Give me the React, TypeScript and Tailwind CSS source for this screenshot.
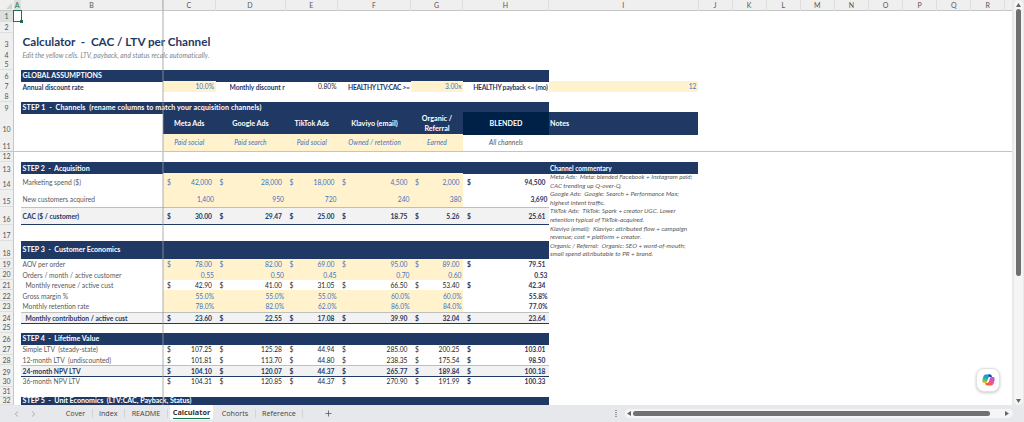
import type { ReactNode } from "react";
import clsx from "clsx";

type Kind = "usd" | "num";
type Line = {
  n: number;
  h: string;
  label: string;
  kind: Kind;
  values: string[];
  input?: boolean;
  total?: boolean;
  indent?: boolean;
  tall?: boolean;
};

const COLS =
  "grid grid-cols-[14px_7px_142px_52.5px_70px_52.5px_73px_52px_86px_149px] w-[698px]";

const HEADERS = ["A", "B", "C", "D", "E", "F", "G", "H", "I", "J", "K", "L", "M", "N", "O", "P", "Q", "R"];

const acquisition: Line[] = [
  { n: 14, h: "h-[17px]", label: "Marketing spend ($)", kind: "usd", input: true, tall: true, values: ["42,000", "28,000", "18,000", "4,500", "2,000", "94,500"] },
  { n: 15, h: "h-[17px]", label: "New customers acquired", kind: "num", input: true, tall: true, values: ["1,400", "950", "720", "240", "380", "3,690"] },
  { n: 16, h: "h-[17.5px]", label: "CAC ($ / customer)", kind: "usd", total: true, values: ["30.00", "29.47", "25.00", "18.75", "5.26", "25.61"] },
];

const economics: Line[] = [
  { n: 19, h: "h-[10.7px]", label: "AOV per order", kind: "usd", input: true, values: ["78.00", "82.00", "69.00", "95.00", "89.00", "79.51"] },
  { n: 20, h: "h-[10.7px]", label: "Orders / month / active customer", kind: "num", input: true, values: ["0.55", "0.50", "0.45", "0.70", "0.60", "0.53"] },
  { n: 21, h: "h-[10.6px]", label: "Monthly revenue / active cust", kind: "usd", indent: true, values: ["42.90", "41.00", "31.05", "66.50", "53.40", "42.34"] },
  { n: 22, h: "h-[10.7px]", label: "Gross margin %", kind: "num", input: true, values: ["55.0%", "55.0%", "55.0%", "60.0%", "60.0%", "55.8%"] },
  { n: 23, h: "h-[10.7px]", label: "Monthly retention rate", kind: "num", input: true, values: ["78.0%", "82.0%", "62.0%", "86.0%", "84.0%", "77.0%"] },
  { n: 24, h: "h-[10.6px]", label: "Monthly contribution / active cust", kind: "usd", total: true, indent: true, values: ["23.60", "22.55", "17.08", "39.90", "32.04", "23.64"] },
];

const lifetime: Line[] = [
  { n: 27, h: "h-[10.7px]", label: "Simple LTV  (steady-state)", kind: "usd", values: ["107.25", "125.28", "44.94", "285.00", "200.25", "103.01"] },
  { n: 28, h: "h-[10.7px]", label: "12-month LTV  (undiscounted)", kind: "usd", values: ["101.81", "113.70", "44.80", "238.35", "175.54", "98.50"] },
  { n: 29, h: "h-[10.6px]", label: "24-month NPV LTV", kind: "usd", total: true, values: ["104.10", "120.07", "44.37", "265.77", "189.84", "100.18"] },
  { n: 30, h: "h-[10.7px]", label: "36-month NPV LTV", kind: "usd", values: ["104.31", "120.85", "44.37", "270.90", "191.99", "100.33"] },
];

const channels = [
  ["Meta Ads", "Paid social"],
  ["Google Ads", "Paid search"],
  ["TikTok Ads", "Paid social"],
  ["Klaviyo (email)", "Owned / retention"],
  ["Organic / Referral", "Earned"],
];

const commentary = [
  ["Meta Ads:  Meta: blended Facebook + Instagram paid;", "CAC trending up Q-over-Q."],
  ["Google Ads:  Google: Search + Performance Max;", "highest intent traffic."],
  ["TikTok Ads:  TikTok: Spark + creator UGC. Lower", "retention typical of TikTok-acquired."],
  ["Klaviyo (email):  Klaviyo: attributed flow + campaign", "revenue; cost = platform + creator."],
  ["Organic / Referral:  Organic: SEO + word-of-mouth;", "small spend attributable to PR + brand."],
];

function RowNumber({ n }: { n: number }) {
  return (
    <div
      className={clsx(
        "flex items-end justify-center border-r border-b border-r-[#c6c6c6] border-b-[#dedede] text-[7px] leading-[7.6px]",
        n === 1 ? "bg-[#dedede] text-[#1e7145]" : "bg-[#efefef] text-[#555]",
        n === 3 && "pb-[3px]",
        n === 4 && "pb-px"
      )}
    >
      {n}
    </div>
  );
}

function Row({ n, h, children }: { n: number; h: string; children?: ReactNode }) {
  return (
    <div className={clsx(COLS, h, "shrink-0")}>
      <RowNumber n={n} />
      <div />
      {children}
    </div>
  );
}

function Band({ n, h, children, note, wide, last }: { n: number; h: string; children: ReactNode; note?: string; wide?: boolean; last?: boolean }) {
  return (
    <Row n={n} h={h}>
      <div
        className={clsx(
          "col-span-7 flex items-center bg-[#1f3864] pl-[1.5px] text-[7.1px] font-bold whitespace-pre text-white",
          wide && "tracking-[0.12px]",
          last ? "leading-[8px]" : "pt-[1.5px]"
        )}
      >
        {children}
      </div>
      {note && (
        <div className="flex items-center bg-[#1f3864] pt-px pl-px text-[6.5px] font-bold text-white">{note}</div>
      )}
    </Row>
  );
}

function DataRow({ line, children }: { line: Line; children?: ReactNode }) {
  const { n, h, label, kind, values, input, total, indent, tall } = line;
  const edge = total && "border-t border-b border-t-[#bfbfbf] border-b-[#1f3864] bg-[#f2f2f2]";
  return (
    <Row n={n} h={h}>
      <div
        className={clsx(
          "flex items-center whitespace-pre",
          edge,
          tall && "pt-[1.5px]",
          indent ? "pl-[4.5px]" : "pl-[1.5px]",
          total ? "font-bold text-[#1f3864]" : "text-[#595959]"
        )}
      >
        {label}
      </div>
      {values.map((v, i) => {
        const blended = i === 5;
        return (
          <div
            key={i}
            className={clsx(
              "flex items-center",
              edge,
              tall && "pt-[1.5px]",
              kind === "usd" ? "justify-between pr-[3.5px] pl-[4px]" : "justify-end pr-[1.5px]",
              input && !blended && "bg-[#fff2cc] text-[#4472c4]",
              (total || blended) && "font-bold text-[#1f3864]",
              !input && !total && !blended && "text-[#262626]"
            )}
          >
            {kind === "usd" && <span>$</span>}
            <span>{v}</span>
          </div>
        );
      })}
      {children}
    </Row>
  );
}

function ColumnHeader() {
  return (
    <div className="grid h-[11px] shrink-0 grid-cols-[14px_7px_142px_52.5px_70px_52.5px_73px_52px_86px_149.5px_repeat(9,34.1px)_1fr] border-b border-[#c6c6c6] bg-[#efefef] text-[7px] leading-[11px] text-[#555]">
      <div className="flex items-end justify-end pr-0.5 pb-0.5">
        <svg width="6" height="6" viewBox="0 0 6 6">
          <path d="M6 0V6H0Z" fill="#d2d2d2" />
        </svg>
      </div>
      {HEADERS.map((c) => (
        <div
          key={c}
          className={clsx(
            "border-r border-[#dedede] text-center",
            c === "A" && "bg-[#dedede] text-[#1e7145]"
          )}
        >
          {c}
        </div>
      ))}
      <div />
    </div>
  );
}

function CopilotButton() {
  return (
    <button className="absolute top-[368px] left-[976px] flex size-6 items-center justify-center rounded-lg border border-[#e2e2e2] bg-white shadow-[0_1px_3px_rgba(0,0,0,0.22)]">
      <svg width="13" height="12" viewBox="0 0 26 24">
        <defs>
          <linearGradient id="cpTop" x1="0.5" y1="0" x2="0.3" y2="1">
            <stop offset="0" stopColor="#1b8fe0" />
            <stop offset="0.5" stopColor="#2bb3a3" />
            <stop offset="1" stopColor="#f0c419" />
          </linearGradient>
          <linearGradient id="cpBottom" x1="0.8" y1="0" x2="0.3" y2="1">
            <stop offset="0" stopColor="#a35be8" />
            <stop offset="0.5" stopColor="#ee5490" />
            <stop offset="1" stopColor="#f8622c" />
          </linearGradient>
        </defs>
        <path d="M8 1H16C18.500 1 19 3 19.700 6H16C13 6 12.500 8 11.500 11L10 16C9 18 8 18 5 18C0 18 0 14 1.500 9C3 4 4 1 8 1Z" fill="url(#cpTop)" />
        <path d="M12 1H16C18.500 1 19 3 19.700 6H16C14.500 6 13.500 4 12 1Z" fill="#1b44b8" />
        <path d="M18 23H10C7.500 23 7 21 6.300 18H10C13 18 13.500 16 14.500 13L16 8C17 6 18 6 21 6C26 6 26 10 24.500 15C23 20 22 23 18 23Z" fill="url(#cpBottom)" />
      </svg>
    </button>
  );
}

function SheetTab({ name, w }: { name: string; w: string }) {
  return (
    <div className={clsx("flex h-[9px] items-center justify-center border-r border-[#d2d4d6]", w)}>{name}</div>
  );
}

function TabBar() {
  return (
    <div className="relative flex h-[17px] shrink-0 items-center bg-[#e6e8eb] font-['Open_Sans',sans-serif] text-[7.2px] text-[#444]">
      <div className="flex w-[59.5px] items-center gap-[12px] pl-[14px]">
        <svg width="5" height="6" viewBox="0 0 5 6" fill="none" stroke="#a5a5a5" strokeWidth="0.9">
          <path d="M4 0.500L1.200 3L4 5.500" />
        </svg>
        <svg width="5" height="6" viewBox="0 0 5 6" fill="none" stroke="#a5a5a5" strokeWidth="0.9">
          <path d="M1 0.500L3.800 3L1 5.500" />
        </svg>
      </div>
      <SheetTab name="Cover" w="w-[33px]" />
      <SheetTab name="Index" w="w-[32.5px]" />
      <SheetTab name="README" w="w-[43px]" />
      <div className="mx-[2px] flex h-full w-[43px] justify-center pb-[2px]">
        <div className="flex w-full justify-center rounded-b-[3px] bg-white">
          <span className="h-[13.5px] border-b border-[#107c41] text-[7.3px] leading-[14px] font-bold text-[#333]">
            Calculator
          </span>
        </div>
      </div>
      <SheetTab name="Cohorts" w="w-[41px]" />
      <SheetTab name="Reference" w="w-[47px]" />
      <svg className="ml-[21.5px]" width="7" height="7" viewBox="0 0 7 7" stroke="#555" strokeWidth="0.8">
        <path d="M3.500 0.500V6.500M0.500 3.500H6.500" />
      </svg>
      <svg className="ml-[283px]" width="2" height="7" viewBox="0 0 2 7" fill="#999">
        <path d="M0 0H2V1H0ZM0 2H2V3H0ZM0 4H2V5H0ZM0 6H2V7H0Z" />
      </svg>
      <div className="ml-[8px] flex h-[9px] w-[388px] items-center rounded-full bg-[#f5f5f5] px-[2px]">
        <svg width="4" height="5" viewBox="0 0 4 5" fill="#666">
          <path d="M4 0V5L0 2.500Z" />
        </svg>
        <div className="ml-[2.5px] h-[5px] w-[357px] rounded-full bg-[#707070]" />
        <svg className="mr-[2px] ml-auto" width="4" height="5" viewBox="0 0 4 5" fill="#666">
          <path d="M0 0V5L4 2.500Z" />
        </svg>
      </div>
    </div>
  );
}

export default function App() {
  return (
    <div className="relative flex h-[422px] w-[1024px] flex-col overflow-hidden bg-white font-[Lato,sans-serif] text-[6.7px]">
      <div className="flex h-[405px] shrink-0">
        <div className="flex w-[1012px] flex-col">
          <ColumnHeader />
          <Row n={1} h="h-[11px]" />
          <Row n={2} h="h-[10.5px]" />
          <Row n={3} h="h-[17px]">
            <div className="flex items-center pb-[3px] pl-[1.5px] text-[11.7px] font-bold whitespace-pre text-[#1f3864]">
              Calculator  -  CAC / LTV per Channel
            </div>
          </Row>
          <Row n={4} h="h-[10px]">
            <div className="flex items-center pb-[2px] pl-[1.5px] tracking-[0.04px] whitespace-nowrap text-[#7f7f7f] italic">
              Edit the yellow cells. LTV, payback, and status recalc automatically.
            </div>
          </Row>
          <Row n={5} h="h-[10px]" />
          <Band n={6} h="h-[11px]">GLOBAL ASSUMPTIONS</Band>
          <Row n={7} h="h-[10.5px]">
            <div className="flex items-center pt-px pl-[1.5px] font-bold tracking-[-0.02px] text-[#1f3864]">
              Annual discount rate
            </div>
            <div className="flex items-center justify-end bg-[#fff2cc] pr-[1.5px] text-[#4472c4]">10.0%</div>
            <div className="ml-[14px] flex items-center overflow-hidden pt-px font-bold tracking-[-0.06px] whitespace-nowrap text-[#1f3864]">
              Monthly discount r
            </div>
            <div className="flex items-center justify-end pr-[1.5px] text-[#262626]">0.80%</div>
            <div className="flex items-center justify-end pt-px pr-[1.5px] font-bold tracking-[-0.32px] whitespace-nowrap text-[#1f3864]">
              HEALTHY LTV:CAC &gt;=
            </div>
            <div className="flex items-center justify-end bg-[#fff2cc] pr-[1.5px] text-[#4472c4]">3.00x</div>
            <div className="flex items-center justify-end pt-px pr-[1.5px] font-bold tracking-[-0.24px] whitespace-nowrap text-[#1f3864]">
              HEALTHY payback &lt;= (mo)
            </div>
            <div className="flex items-center justify-end bg-[#fff2cc] pr-[1.5px] text-[#4472c4]">12</div>
          </Row>
          <Row n={8} h="h-[10.5px]" />
          <Band n={9} h="h-[10.5px]" wide>STEP 1  -  Channels  (rename columns to match your acquisition channels)</Band>
          <Row n={10} h="h-[21.5px]">
            <div />
            {channels.map(([name]) => (
              <div
                key={name}
                className={clsx(
                  "flex items-center justify-center bg-[#1f3864] pt-[1.5px] text-center text-[7.2px] leading-[10.5px] font-bold text-white",
                  name.startsWith("Organic") && "px-[8px]"
                )}
              >
                {name}
              </div>
            ))}
            <div className="flex items-center justify-center bg-[#002147] pt-[1.5px] text-[7.1px] font-bold text-white">
              BLENDED
            </div>
            <div className="flex items-center bg-[#1f3864] pt-[1.5px] pl-px text-[7.2px] font-bold text-white">Notes</div>
          </Row>
          <Row n={11} h="h-[18px]">
            <div />
            {channels.map(([name, type]) => (
              <div
                key={name}
                className="flex items-center justify-center bg-[#fff2cc] tracking-[0.08px] text-[#4472c4] italic"
              >
                {type}
              </div>
            ))}
            <div className="flex items-center justify-center tracking-[0.08px] text-[#595959] italic">All channels</div>
          </Row>
          <Row n={12} h="h-[10.5px]" />
          <Band n={13} h="h-[11px]" note="Channel commentary">STEP 2  -  Acquisition</Band>
          {acquisition.map((line) => (
            <DataRow key={line.n} line={line}>
              {line.n === 14 && (
                <div className="h-0 pl-px text-[6.4px] leading-[8.6px] whitespace-pre text-[#595959] italic">
                  {commentary.flat().map((t) => (
                    <p key={t}>{t}</p>
                  ))}
                </div>
              )}
            </DataRow>
          ))}
          <Row n={17} h="h-[16.5px]" />
          <Band n={18} h="h-[17.5px]">STEP 3  -  Customer Economics</Band>
          {economics.map((line) => (
            <DataRow key={line.n} line={line} />
          ))}
          <Row n={25} h="h-[10.5px]" />
          <Band n={26} h="h-[11px]">STEP 4  -  Lifetime Value</Band>
          {lifetime.map((line) => (
            <DataRow key={line.n} line={line} />
          ))}
          <Row n={31} h="h-[10.3px]" />
          <Band n={32} h="h-[8.5px]" last>STEP 5  -  Unit Economics  (LTV:CAC, Payback, Status)</Band>
        </div>

        {/* vertical scrollbar */}
        <div className="flex w-[12px] justify-center bg-[#e9e9e9]">
          <div className="flex w-[9px] flex-col items-center rounded-full bg-[#f5f5f5] pt-[3px] pb-[2px]">
            <svg width="5" height="4" viewBox="0 0 5 4" fill="#666">
              <path d="M0 4H5L2.500 0Z" />
            </svg>
            <div className="mt-[2px] h-[267px] w-[5px] rounded-full bg-[#707070]" />
            <svg className="mt-auto" width="5" height="4" viewBox="0 0 5 4" fill="#666">
              <path d="M0 0H5L2.500 4Z" />
            </svg>
          </div>
        </div>
      </div>
      <TabBar />

      {/* freeze pane lines */}
      <div className="absolute top-0 left-[162px] h-[405px] w-[2px] bg-[#999]/40" />
      <div className="absolute top-[151px] left-0 h-px w-[1012px] bg-[#c4c4c4]" />

      {/* active cell A1 */}
      <div className="absolute top-[10px] left-[13px] h-[12px] w-[9px] border border-[#1e7145]">
        <span className="absolute -right-[1.5px] -bottom-[1.5px] size-[3px] bg-[#1e7145]" />
      </div>

      <CopilotButton />
    </div>
  );
}
